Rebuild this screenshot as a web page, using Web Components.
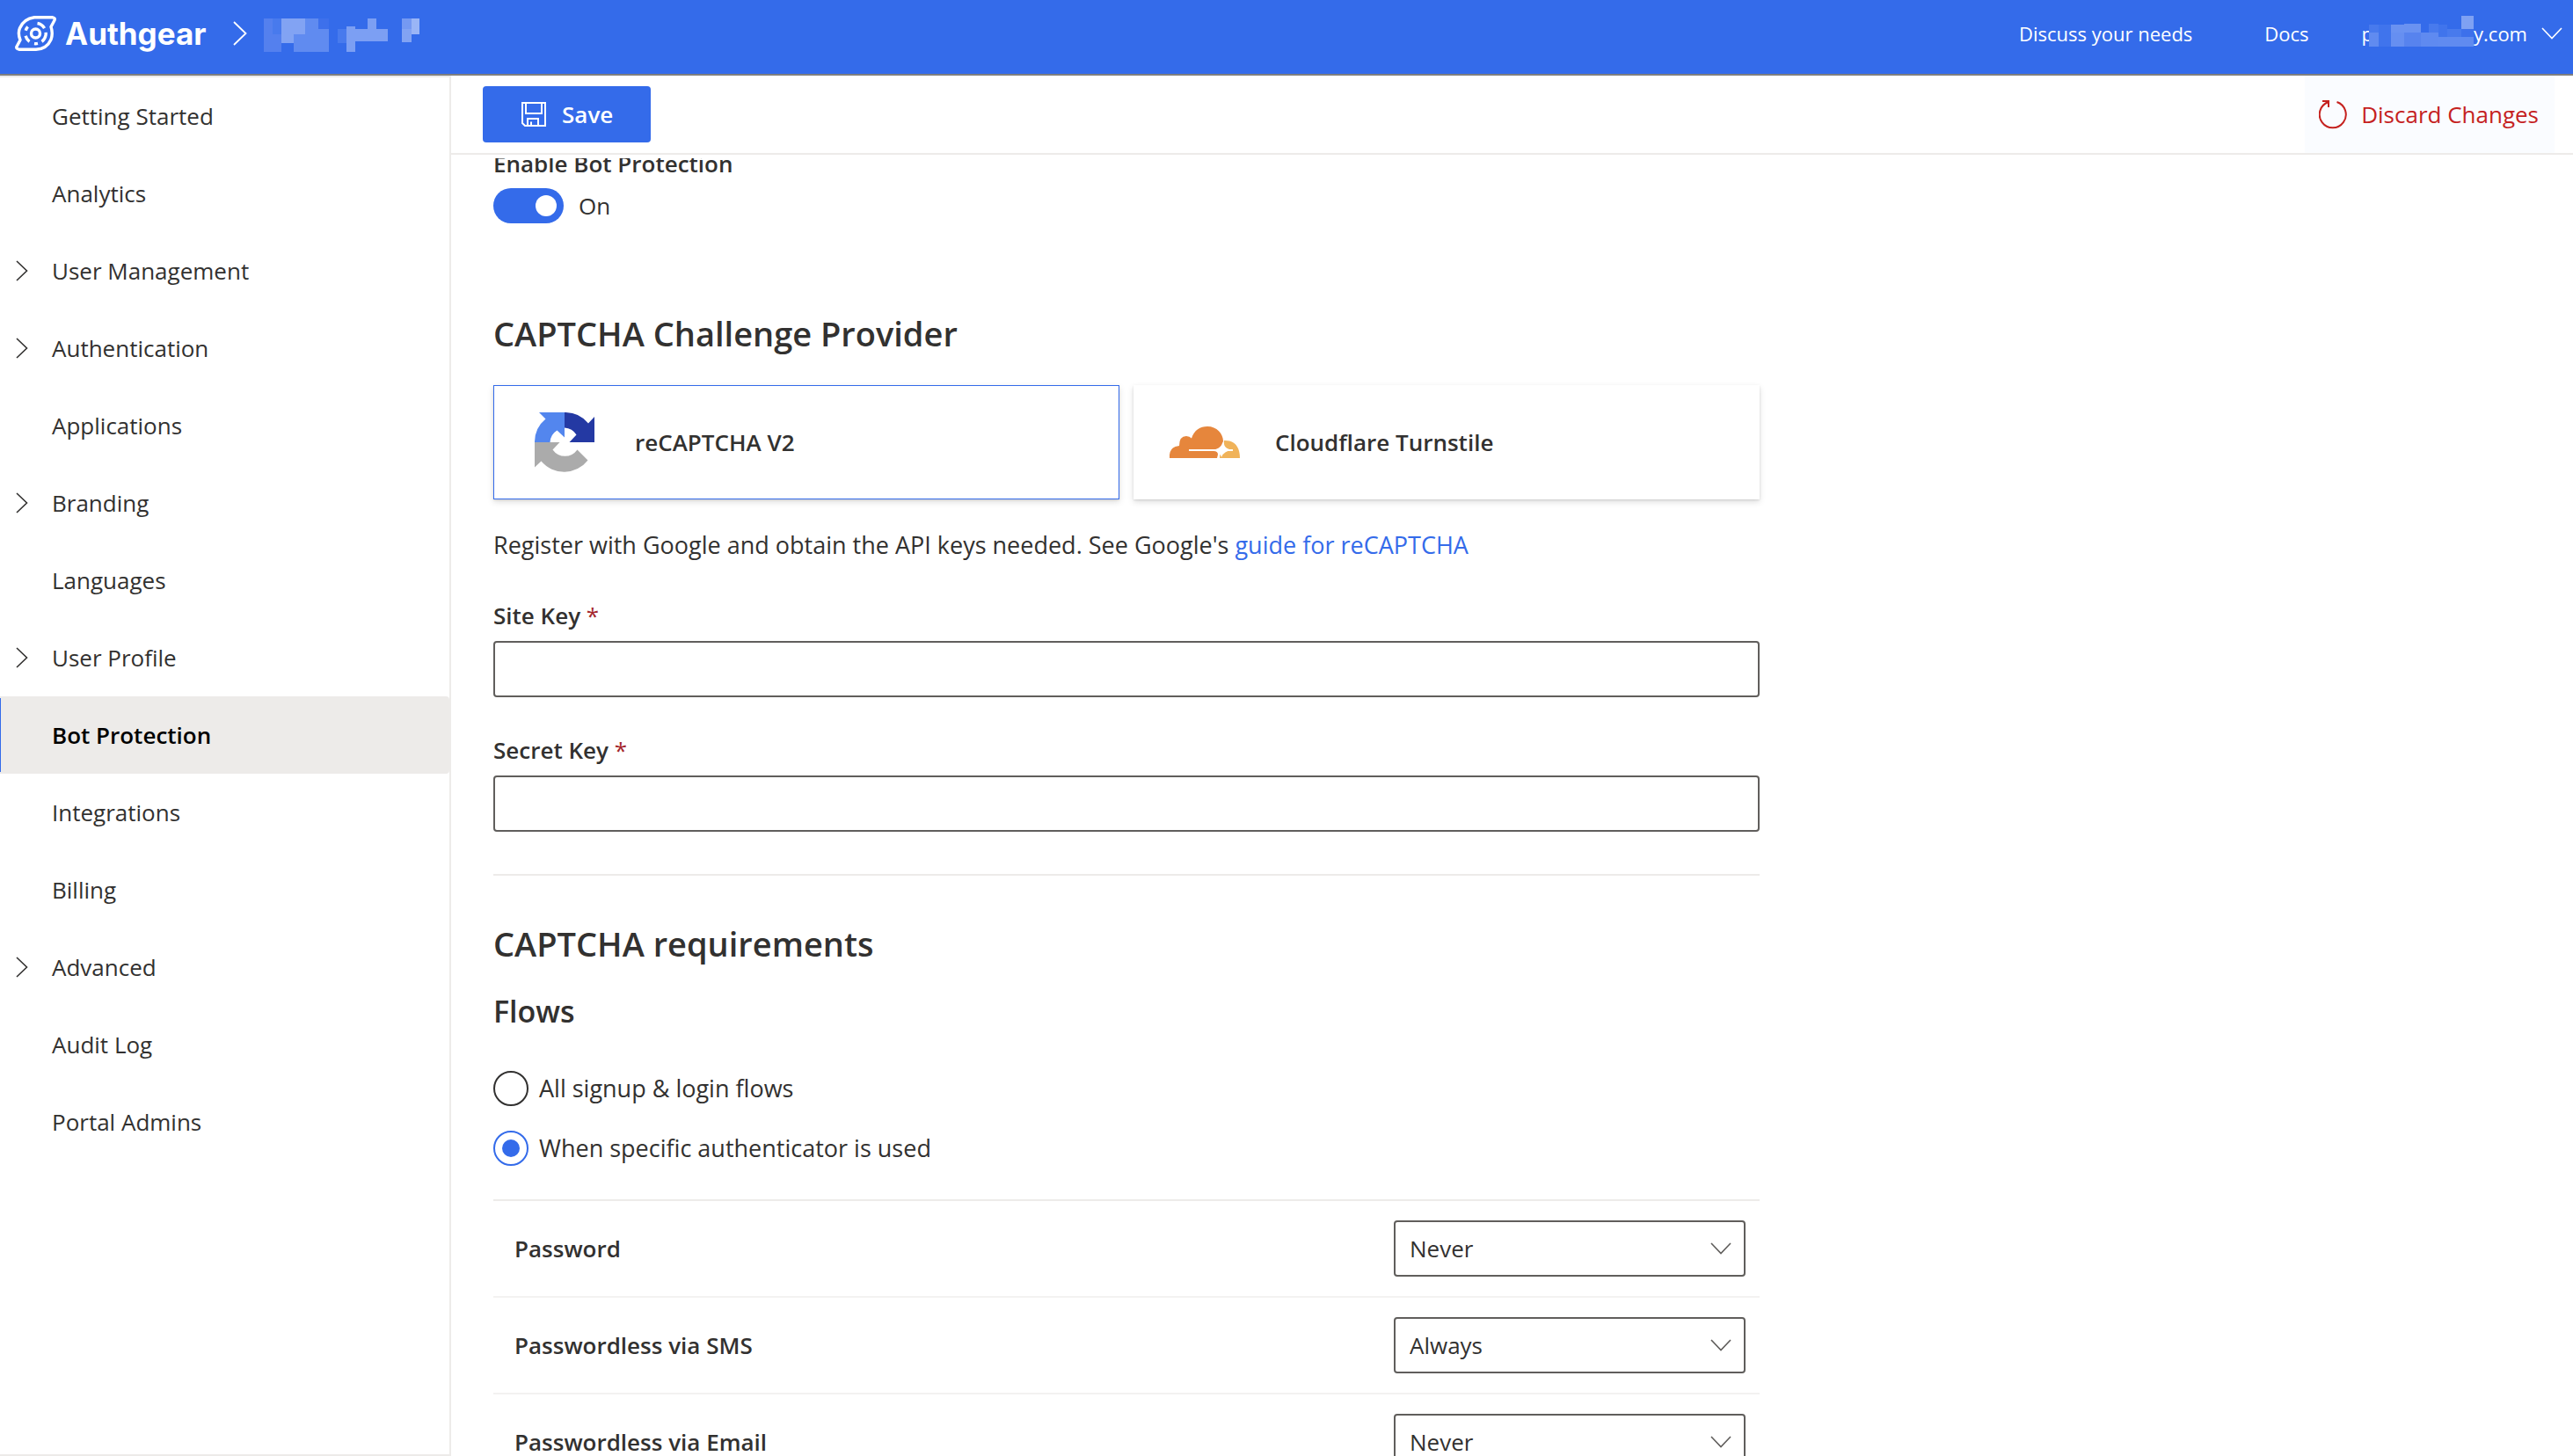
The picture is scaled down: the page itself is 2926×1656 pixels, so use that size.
<!DOCTYPE html>
<html lang="en">
<head>
<meta charset="utf-8">
<title>Bot Protection</title>
<style>
  html, body { height: 100%; margin: 0; }
  body {
    --blue: #346bea;
    --ink: #323130;
    --line: #edebe9;
    --field: #605e5c;
    font-family: "Open Sans", "Noto Sans", sans-serif;
    font-size: 26px;
    line-height: 40px;
    color: var(--ink);
    background: #fff;
    overflow: hidden;
  }
</style>
</head>
<body>
<portal-app></portal-app>

<template id="t-app">
  <style>
    :host { display: flex; flex-direction: column; height: 100vh; }
    .body { flex: 1; display: flex; min-height: 0; }
    .main { flex: 1; display: flex; flex-direction: column; min-width: 0; }
  </style>
  <portal-header></portal-header>
  <div class="body">
    <side-nav></side-nav>
    <div class="main">
      <command-bar></command-bar>
      <bot-protection></bot-protection>
    </div>
  </div>
</template>

<template id="t-header">
  <style>
    :host { display: block; border-bottom: 2px solid #7f7f7f; }
    header { height: 84px; background: var(--blue); color: #fff; display: flex; align-items: center; padding: 0 12px 8px 17px; box-sizing: border-box; font-size: 22px; line-height: 32px; }
    .logo { display: flex; align-items: center; gap: 10px; color: #fff; text-decoration: none; font: 700 35px/40px "Inter", sans-serif; }
    svg { display: block; }
    .crumb { margin: 0 19px 0 30px; }
    .links { margin-left: auto; display: flex; align-items: center; }
    .links a { color: #fff; text-decoration: none; margin-right: 82px; }
    .links a:last-of-type { margin-right: 60px; }
    .account { font: inherit; color: #fff; background: none; border: 0; padding: 0; margin: 0; display: flex; align-items: center; }
    .account .mask { margin-left: -5px; }
    .account .arrow { margin-left: 16px; }
  </style>
  <header>
    <a class="logo" href="#">
      <svg width="47" height="40" viewBox="0 0 47 40" fill="none" stroke="#fff" stroke-width="3.4" stroke-linecap="round" stroke-linejoin="round">
        <path d="M22 1.8H43Q46 2.4 45 5L41 12.500Q43.500 20 41 27Q36 38 24 38.200H4.500Q1 37.500 2 35L6 27.500Q3 20 5.500 14Q10 3.500 22 1.800Z"/>
        <circle cx="23.500" cy="20" r="5"/>
        <circle cx="23.500" cy="20" r="11.700" stroke-dasharray="10 5 12 5 4 6 8 6 5 12.500" stroke-linecap="butt" transform="rotate(-80 23.500 20)"/>
      </svg>
      <span>Authgear</span>
    </a>
    <svg class="crumb" width="16" height="28" viewBox="0 0 16 28" fill="none" stroke="#fff" stroke-width="1.800"><path d="M1 1L14.500 14L1 27"/></svg>
    <svg width="190" height="43" viewBox="0 -4 190 43" shape-rendering="crispEdges" role="img" aria-label="Project">
      <path fill="#5480ee" d="M0 0h10v18h10v20H0z"/><path fill="#487aed" d="M10 0h10v18H10z"/>
      <path fill="#82a3f3" d="M20 0h27v18H34v10H20z"/><path fill="#608bf0" d="M47 0h15v12h12v26H34V18h13z"/><path fill="#3d70eb" d="M62 0h12v12H62z"/>
      <path fill="#487aed" d="M84 12h10v16H84z"/><path fill="#7c9ff3" d="M94 9h10v3h14V0h10v12h13v14H104v12H94z"/>
      <path fill="#7599f2" d="M157 0h11v12h-11z"/><path fill="#82a3f3" d="M157 12h11v15h-11z"/><path fill="#9ab5f6" d="M168 0h9v18h-9z"/>
    </svg>
    <nav class="links">
      <a href="#">Discuss your needs</a>
      <a href="#">Docs</a>
      <button class="account" type="button">
        <span>p</span>
        <svg class="mask" width="119" height="40" viewBox="0 0 119 40" shape-rendering="crispEdges" aria-hidden="true">
          <path fill="#346bea" d="M0 9h119v27H0z"/>
          <path fill="#487aed" d="M0 10h11v9H0z"/><path fill="#608bf0" d="M0 19h11v16H0z"/><path fill="#4074ec" d="M11 10h14v25H11z"/>
          <path fill="#6a92f1" d="M25 10h15V9h19v10H25z"/><path fill="#668ff1" d="M25 19h15v16H25z"/><path fill="#5783ee" d="M40 19h19v16H40z"/>
          <path fill="#5f8af0" d="M59 19h20v16H59z"/><path fill="#487aed" d="M68 9h11v10H68z"/><path fill="#4074ec" d="M79 10h10v14H79z"/>
          <path fill="#487aed" d="M89 15h16v9H89z"/><path fill="#608bf0" d="M79 24h40v11H79z"/><path fill="#3d70eb" d="M105 15h14v9h-14z"/><path fill="#7fa1f3" d="M105 0h14v15h-14z"/>
        </svg>
        <span>y.com</span>
        <svg class="arrow" width="24" height="14" viewBox="0 0 24 14" fill="none" stroke="#fff" stroke-width="1.600"><path d="M1 1L12 12.500L23 1"/></svg>
      </button>
    </nav>
  </header>
</template>

<template id="t-side">
  <style>
    :host { display: block; width: 511px; flex: none; border: solid var(--line); border-width: 2px 2px 2px 0; box-sizing: content-box; }
  </style>
  <nav aria-label="Portal">
    <nav-item>Getting Started</nav-item>
    <nav-item>Analytics</nav-item>
    <nav-item group>User Management</nav-item>
    <nav-item group>Authentication</nav-item>
    <nav-item>Applications</nav-item>
    <nav-item group>Branding</nav-item>
    <nav-item>Languages</nav-item>
    <nav-item group>User Profile</nav-item>
    <nav-item active>Bot Protection</nav-item>
    <nav-item>Integrations</nav-item>
    <nav-item>Billing</nav-item>
    <nav-item group>Advanced</nav-item>
    <nav-item>Audit Log</nav-item>
    <nav-item>Portal Admins</nav-item>
  </nav>
</template>

<template id="t-item">
  <style>
    :host { display: block; }
    a { display: flex; align-items: center; height: 88px; color: inherit; text-decoration: none; box-sizing: border-box; border-radius: 4px; }
    .mark { width: 41px; padding-left: 18px; flex: none; }
    svg { display: none; }
    :host([group]) svg { display: block; }
    :host([active]) a { background: linear-gradient(var(--blue), var(--blue)) left center / 1px 84px no-repeat var(--line); color: #000; font-weight: 600; border-radius: 0 4px 4px 0; }
  </style>
  <a href="#"><span class="mark"><svg width="14" height="24" viewBox="0 0 14 24" fill="none" stroke="#323130" stroke-width="1.600"><path d="M1 1L12.500 12L1 23"/></svg></span><slot></slot></a>
</template>

<template id="t-bar">
  <style>
    :host { display: flex; align-items: stretch; justify-content: space-between; height: 88px; flex: none; border-bottom: 2px solid var(--line); padding: 0 21px 0 36px; }
    button { font: inherit; border: 0; display: flex; align-items: center; cursor: pointer; }
    .save { align-self: center; width: 191px; height: 64px; padding: 0 0 0 44px; gap: 18px; background: var(--blue); color: #fff; border-radius: 4px; font-weight: 600; }
    .discard { background: #fafcff; color: #c5221f; gap: 16px; padding: 0 18px 0 16px; }
  </style>
  <button class="save" type="button">
    <svg width="28" height="28" viewBox="0 0 28 28" fill="none" stroke="#fff" stroke-width="2"><path d="M1 1H27V27H4L1 24ZM5 1V13H23V1M7 27V19H19V27M11 27V22.500"/></svg>
    <span>Save</span>
  </button>
  <button class="discard" type="button">
    <svg width="32" height="34" viewBox="0 0 32 34" fill="none" stroke="#c5221f" stroke-width="2"><path d="M4 2H11V9M11 3A15 15 0 1 0 20.500 3"/></svg>
    <span>Discard Changes</span>
  </button>
</template>

<template id="t-page">
  <style>
    :host { display: block; flex: 1; min-height: 0; overflow: hidden; margin-top: 4px; padding: 0 48px; }
    main { max-width: 1440px; }
    h2, h3 { margin: 0; font-weight: 600; }
    h2 { font-size: 38px; line-height: 56px; }
    h3 { font-size: 34px; line-height: 48px; margin-top: 25px; }
    .toggle { margin-top: -14px; margin-bottom: 97px; }
    .cards { display: grid; grid-template-columns: 1fr 1fr; gap: 16px; margin: 31px 0 32px; }
    p { margin: 0 0 40px; font-size: 27px; }
    a { color: var(--blue); text-decoration: none; }
    .fields { display: grid; gap: 40px; padding-bottom: 48px; border-bottom: 2px solid var(--line); margin-bottom: 49px; }
    flow-options { margin: 44px 0 38px; font-size: 27px; }
  </style>
  <main>
    <toggle-field class="toggle" label="Enable Bot Protection">On</toggle-field>
    <h2>CAPTCHA Challenge Provider</h2>
    <div class="cards">
      <provider-card name="reCAPTCHA V2" selected>
        <svg width="68" height="68" viewBox="0 0 68 68">
          <path fill="#2439a3" d="M34 0A34 34 0 0 1 61 12.500L68 5V34H39.500L47.500 25.500A17 17 0 0 0 34 17.500Z"/>
          <path fill="#5386ee" d="M34 0V28.500L25.500 20.500A17 17 0 0 0 17.500 34H0A34 34 0 0 1 12.500 7.500L5 0Z"/>
          <path fill="#ababab" d="M0 34H28.500L20.500 42.500A17 17 0 0 0 48.500 42.500L60.500 54.500A34 34 0 0 1 7.500 55.500L0 62.500Z"/>
        </svg>
      </provider-card>
      <provider-card name="Cloudflare Turnstile">
        <svg width="80" height="36" viewBox="0 0 80 36">
          <path fill="#e6863c" d="M0 36Q-1 23 11 22Q11 11 19 11Q23 11 25 13.500C28 4 35 0 43 0C56 0 64 12 60 23L56 26H22V28H50Q55 28 55 32L54 36Z"/>
          <path fill="#f0b35a" d="M63 16C74 16 80 23 80 36H57Q57 28 65 28H72V26H67Q61 24 62 16Z"/>
          <path fill="#fff" d="M60.500 17Q61.500 26 72 26.800Q62 27.500 59 35Q57 27.500 48 26.800Q59 26 60.500 17Z"/>
        </svg>
      </provider-card>
    </div>
    <p>Register with Google and obtain the API keys needed. See Google's <a href="#">guide for reCAPTCHA</a></p>
    <div class="fields">
      <key-field label="Site Key"></key-field>
      <key-field label="Secret Key"></key-field>
    </div>
    <h2>CAPTCHA requirements</h2>
    <h3>Flows</h3>
    <flow-options></flow-options>
    <requirement-table></requirement-table>
  </main>
</template>

<template id="t-toggle">
  <style>
    :host { display: block; }
    .title { display: block; font-weight: 600; margin-bottom: 8px; }
    .row { display: flex; align-items: center; gap: 17px; }
    input { appearance: none; margin: 0; width: 80px; height: 40px; padding: 8px; box-sizing: border-box; border-radius: 20px; background: var(--blue); display: flex; justify-content: flex-end; }
    input::before { content: ""; width: 24px; height: 24px; border-radius: 50%; background: #fff; }
  </style>
  <label class="title" for="sw"></label>
  <div class="row"><input id="sw" type="checkbox" role="switch" checked><slot></slot></div>
</template>

<template id="t-card">
  <style>
    :host { display: block; }
    button { font: inherit; font-weight: 600; color: inherit; text-align: left; width: 100%; height: 130px; box-sizing: border-box; display: flex; align-items: center; gap: 40px; padding: 0 40px; background: #fff; border: 1px solid transparent; box-shadow: 0 3px 7px rgba(0,0,0,.13), 0 1px 2px rgba(0,0,0,.11); }
    :host([selected]) button { border-color: var(--blue); }
    .icon { width: 80px; display: flex; justify-content: center; }
  </style>
  <button type="button"><span class="icon"><slot></slot></span><span class="name"></span></button>
</template>

<template id="t-key">
  <style>
    :host { display: block; }
    label { display: block; font-weight: 600; margin-bottom: 9px; }
    .req { color: #a4262c; font-weight: 400; }
    input { display: block; width: 100%; height: 64px; box-sizing: border-box; border: 2px solid var(--field); border-radius: 4px; padding: 0 16px; font: inherit; color: inherit; background: #fff; }
  </style>
  <label for="k"><span class="text"></span> <span class="req">*</span></label>
  <input id="k" type="text" required>
</template>

<template id="t-flows">
  <style>
    :host { display: grid; gap: 28px; }
    label { display: flex; align-items: center; gap: 12px; }
    input { appearance: none; margin: 0; width: 40px; height: 40px; box-sizing: border-box; border: 2px solid var(--ink); border-radius: 50%; display: grid; place-items: center; }
    input:checked { border-color: var(--blue); }
    input:checked::before { content: ""; width: 20px; height: 20px; border-radius: 50%; background: var(--blue); }
  </style>
  <label><input type="radio" name="flow"><span>All signup &amp; login flows</span></label>
  <label><input type="radio" name="flow" checked><span>When specific authenticator is used</span></label>
</template>

<template id="t-table">
  <style>
    :host { display: block; border-top: 2px solid var(--line); }
    table { width: 100%; border-collapse: separate; border-spacing: 0; }
    th, td { height: 108px; padding: 0; border-bottom: 2px solid #f3f2f1; vertical-align: middle; }
    th { text-align: left; font-weight: 600; padding-left: 24px; }
    td { width: 400px; padding-right: 16px; }
    .pick { display: grid; align-items: center; }
    .pick > * { grid-area: 1 / 1; }
    select { appearance: none; width: 100%; height: 64px; box-sizing: border-box; border: 2px solid var(--field); border-radius: 4px; padding: 0 56px 0 16px; font: inherit; color: inherit; background: #fff; }
    svg { justify-self: end; margin-right: 16px; pointer-events: none; }
  </style>
  <table><tbody></tbody></table>
</template>

<script>
  class TemplateElement extends HTMLElement {
    constructor() {
      super();
      const source = document.getElementById(this.constructor.template);
      this.attachShadow({ mode: "open" }).append(source.content.cloneNode(true));
    }
    fill(selector, attribute) {
      this.shadowRoot.querySelector(selector).textContent = this.getAttribute(attribute);
    }
  }

  class NavItem extends TemplateElement {
    static template = "t-item";
    connectedCallback() {
      if (this.hasAttribute("active")) this.shadowRoot.querySelector("a").setAttribute("aria-current", "page");
    }
  }
  class SideNav extends TemplateElement { static template = "t-side"; }
  class PortalHeader extends TemplateElement { static template = "t-header"; }
  class CommandBar extends TemplateElement { static template = "t-bar"; }

  class ToggleField extends TemplateElement {
    static template = "t-toggle";
    connectedCallback() { this.fill(".title", "label"); }
  }
  class ProviderCard extends TemplateElement {
    static template = "t-card";
    connectedCallback() {
      this.fill(".name", "name");
      this.shadowRoot.querySelector("button").setAttribute("aria-pressed", this.hasAttribute("selected"));
    }
  }
  class KeyField extends TemplateElement {
    static template = "t-key";
    connectedCallback() { this.fill(".text", "label"); }
  }
  class FlowOptions extends TemplateElement { static template = "t-flows"; }

  class RequirementTable extends TemplateElement {
    static template = "t-table";
    connectedCallback() {
      const rows = [["Password", "Never"], ["Passwordless via SMS", "Always"], ["Passwordless via Email", "Never"]];
      this.shadowRoot.querySelector("tbody").innerHTML = rows.map(([name, value], i) => `
        <tr>
          <th scope="row"><label for="r${i}">${name}</label></th>
          <td><div class="pick">
            <select id="r${i}"><option>${value}</option></select>
            <svg width="24" height="14" viewBox="0 0 24 14" fill="none" stroke="#605e5c" stroke-width="1.600"><path d="M1 1L12 12.500L23 1"/></svg>
          </div></td>
        </tr>`).join("");
    }
  }
  class BotProtection extends TemplateElement { static template = "t-page"; }
  class PortalApp extends TemplateElement { static template = "t-app"; }

  customElements.define("nav-item", NavItem);
  customElements.define("side-nav", SideNav);
  customElements.define("portal-header", PortalHeader);
  customElements.define("command-bar", CommandBar);
  customElements.define("toggle-field", ToggleField);
  customElements.define("provider-card", ProviderCard);
  customElements.define("key-field", KeyField);
  customElements.define("flow-options", FlowOptions);
  customElements.define("requirement-table", RequirementTable);
  customElements.define("bot-protection", BotProtection);
  customElements.define("portal-app", PortalApp);
</script>
</body>
</html>
